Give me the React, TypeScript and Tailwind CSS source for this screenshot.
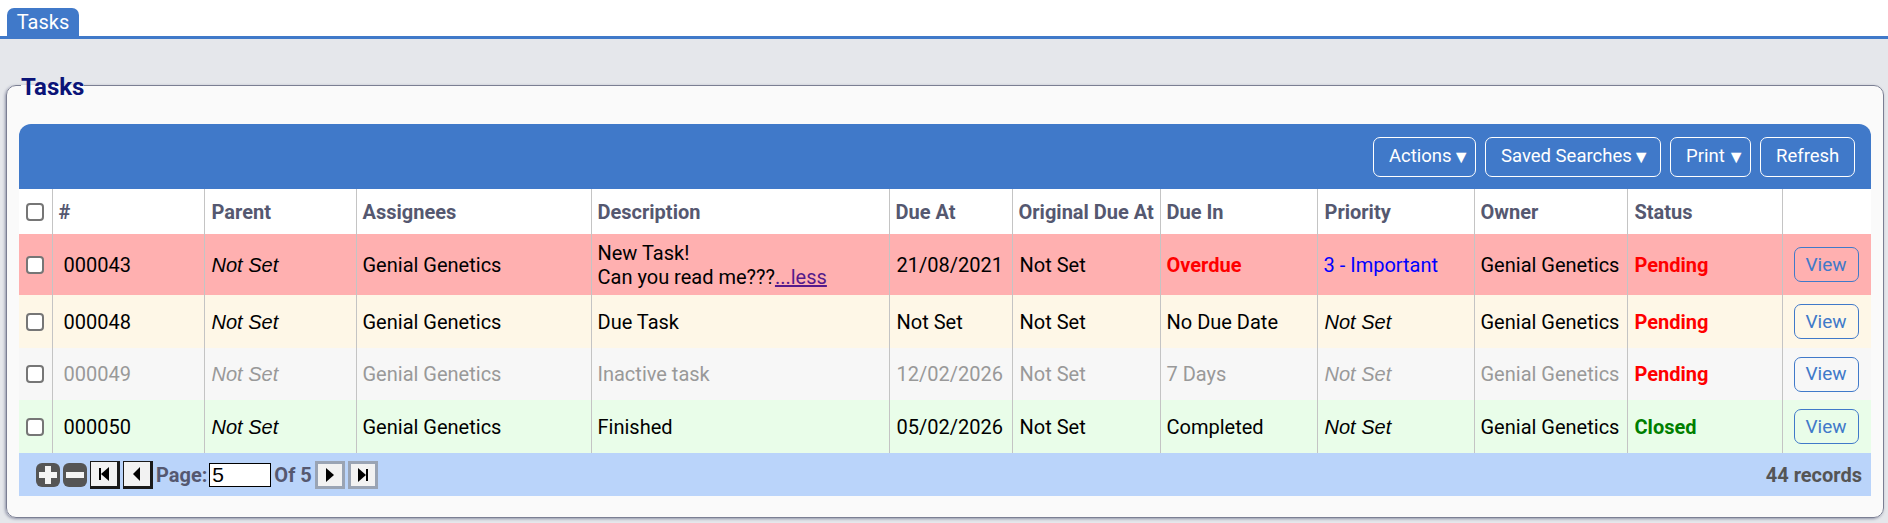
import type { ReactNode } from 'react';

const font = 'font-["Roboto","Liberation_Sans",sans-serif]';

interface Task {
  id: string;
  description: ReactNode;
  dueAt: string;
  dueIn: string;
  dueInClass?: string;
  priority: string;
  priorityClass?: string;
  status: string;
  statusClass: string;
  rowClass: string;
  heightClass: string;
}

const notSet = "pl-[7px] font-['Liberation_Sans'] italic";

const tasks: Task[] = [
  {
    id: '000043',
    description: (
      <>
        New Task!
        <br />
        Can you read me???
        <a className="text-[#551a8b] underline" href="#less">
          ...less
        </a>
      </>
    ),
    dueAt: '21/08/2021',
    dueIn: 'Overdue',
    dueInClass: 'font-bold text-[#ff0000]',
    priority: '3 - Important',
    priorityClass: 'text-[#0000ff]',
    status: 'Pending',
    statusClass: 'text-[#ff0000]',
    rowClass: 'bg-[#ffb0b0] text-black',
    heightClass: 'h-[61px]',
  },
  {
    id: '000048',
    description: 'Due Task',
    dueAt: 'Not Set',
    dueIn: 'No Due Date',
    priority: 'Not Set',
    priorityClass: notSet,
    status: 'Pending',
    statusClass: 'text-[#ff0000]',
    rowClass: 'bg-[#fef7e7] text-black',
    heightClass: 'h-[53px]',
  },
  {
    id: '000049',
    description: 'Inactive task',
    dueAt: '12/02/2026',
    dueIn: '7 Days',
    priority: 'Not Set',
    priorityClass: notSet,
    status: 'Pending',
    statusClass: 'text-[#ff0000]',
    rowClass: 'bg-[#f7f7f7] text-[#999999]',
    heightClass: 'h-[52px]',
  },
  {
    id: '000050',
    description: 'Finished',
    dueAt: '05/02/2026',
    dueIn: 'Completed',
    priority: 'Not Set',
    priorityClass: notSet,
    status: 'Closed',
    statusClass: 'text-[#007f00]',
    rowClass: 'bg-[#e9fde9] text-black',
    heightClass: 'h-[53px]',
  },
];

const columns = ['#', 'Parent', 'Assignees', 'Description', 'Due At', 'Original Due At', 'Due In', 'Priority', 'Owner', 'Status', ''];
const widerPad = ['Parent', 'Priority', 'Status'];

function Checkbox() {
  return <span className="block h-[18px] w-[18px] rounded-[4px] border-2 border-[#767676] bg-white" />;
}

function ToolbarButton({ label, caret, className }: { label: string; caret?: boolean; className: string }) {
  return (
    <button className={`flex h-10 items-center justify-between whitespace-nowrap rounded-[7px] border border-white bg-[#4079c9] pl-[15px] text-[18.5px] text-white ${className}`}>
      <span>{label}</span>
      {caret ? <span className="text-[18px] leading-none">▼</span> : null}
    </button>
  );
}

function RoundIcon({ minus }: { minus?: boolean }) {
  return (
    <span className="flex h-[24px] w-[24px] items-center justify-center rounded-[6px] bg-[#555555]">
      <svg width="20" height="20" viewBox="0 0 20 20">
        <path d={minus ? 'M1 7h18v6H1z' : 'M7 1h6v6h6v6h-6v6H7v-6H1V7h6z'} fill="#f4f4f4" />
      </svg>
    </span>
  );
}

function PagerButton({ d, active, bar }: { d: string; active?: boolean; bar?: 'left' | 'right' }) {
  return (
    <button
      className={
        active
          ? 'flex h-[28px] w-[30px] items-center justify-center border border-b-[3px] border-r-[3px] border-[#1a1a1a] bg-[#f2f2f2]'
          : 'flex h-[28px] w-[30px] items-center justify-center border-[3px] border-[#9aa4b4] bg-[#f2f2f2]'
      }
    >
      <svg width="14" height="14" viewBox="0 0 14 14">
        <path d={d} fill="#000000" />
        {bar === 'left' ? <rect x="2" y="1" width="2" height="12" fill="#000000" /> : null}
        {bar === 'right' ? <rect x="10" y="1" width="2" height="12" fill="#000000" /> : null}
      </svg>
    </button>
  );
}

const cell = 'whitespace-nowrap border-l border-[#c4c4c4] px-[6px] text-[20px] leading-[24px]';

export default function App() {
  return (
    <div className={`${font} h-[523px] w-[1888px] overflow-hidden bg-[#e5e7eb]`}>
      <div className="flex h-[39px] items-end border-b-[3px] border-[#4079c9] bg-white pl-[7px]">
        <div className="flex h-[28px] w-[72px] items-center justify-center rounded-t-[7px] bg-[#4079c9] text-[20px] text-white">Tasks</div>
      </div>
      <div className="pl-[6px] pt-[32px]">
        <fieldset className="h-[447px] w-[1877px] rounded-[10px] border border-[#7b7f93] bg-[#fafafa] px-[12px] shadow-[-1px_1px_3px_#8f93a8]">
          <legend className="ml-[2px] pt-[4px] text-[24px] font-bold leading-[24px] text-[#0b1478]">Tasks</legend>
          <div className="mt-[25px] flex h-[65px] items-center justify-end gap-[9px] rounded-t-[12px] bg-[#4079c9] pr-[16px]">
            <ToolbarButton label="Actions" caret className="w-[103px] pr-[5px]" />
            <ToolbarButton label="Saved Searches" caret className="w-[176px] pr-[10px]" />
            <ToolbarButton label="Print" caret className="w-[81px] pr-[5px]" />
            <ToolbarButton label="Refresh" className="w-[95px]" />
          </div>
          <table className="w-[1852px] table-fixed border-collapse">
            <colgroup>
              <col className="w-[33px]" />
              <col className="w-[152px]" />
              <col className="w-[152px]" />
              <col className="w-[235px]" />
              <col className="w-[298px]" />
              <col className="w-[123px]" />
              <col className="w-[148px]" />
              <col className="w-[157px]" />
              <col className="w-[157px]" />
              <col className="w-[153px]" />
              <col className="w-[155px]" />
              <col className="w-[89px]" />
            </colgroup>
            <thead>
              <tr className="h-[45px] bg-white text-left">
                <th className="px-[7px]">
                  <Checkbox />
                </th>
                {columns.map((col) => (
                  <th key={col} className={`${cell} font-bold text-[#555870] ${widerPad.includes(col) ? 'pl-[7px]' : ''}`}>
                    {col}
                  </th>
                ))}
              </tr>
            </thead>
            <tbody>
              {tasks.map((task) => (
                <tr key={task.id} className={`${task.rowClass} ${task.heightClass}`}>
                  <td className="px-[7px]">
                    <Checkbox />
                  </td>
                  <td className={`${cell} pl-[11px]`}>{task.id}</td>
                  <td className={`${cell} ${notSet}`}>Not Set</td>
                  <td className={cell}>Genial Genetics</td>
                  <td className={cell}>{task.description}</td>
                  <td className={`${cell} pl-[7px]`}>{task.dueAt}</td>
                  <td className={`${cell} pl-[7px]`}>Not Set</td>
                  <td className={`${cell} ${task.dueInClass ?? ''}`}>{task.dueIn}</td>
                  <td className={`${cell} ${task.priorityClass ?? ''}`}>{task.priority}</td>
                  <td className={cell}>Genial Genetics</td>
                  <td className={`${cell} pl-[7px] font-bold ${task.statusClass}`}>{task.status}</td>
                  <td className={cell}>
                    <button className="ml-[5px] h-[35px] w-[65px] rounded-[7px] border border-[#4079c9] bg-transparent text-[19px] text-[#4079c9]">View</button>
                  </td>
                </tr>
              ))}
            </tbody>
          </table>
          <div className="flex h-[43px] items-center justify-between bg-[#bad4fa] pl-[17px] pr-[9px] text-[20px] font-bold text-[#555870]">
            <div className="flex items-center">
              <RoundIcon />
              <span className="w-[3px]" />
              <RoundIcon minus />
              <span className="w-[3px]" />
              <PagerButton active d="M12 0v14L4 7z" bar="left" />
              <span className="w-[3px]" />
              <PagerButton active d="M10 0v14L3 7z" />
              <span className="ml-[3px]">Page:</span>
              <input
                readOnly
                value="5"
                className="ml-[2px] h-[24px] w-[62px] border border-black bg-white px-[2px] font-['Liberation_Sans'] text-[21px] font-normal leading-none text-black"
              />
              <span className="ml-[3px]">Of 5</span>
              <span className="w-[3px]" />
              <PagerButton d="M3 0v14l8-7z" />
              <span className="w-[3px]" />
              <PagerButton d="M2 0v14l8-7z" bar="right" />
            </div>
            <span className="text-[#555555]">44 records</span>
          </div>
        </fieldset>
      </div>
    </div>
  );
}
